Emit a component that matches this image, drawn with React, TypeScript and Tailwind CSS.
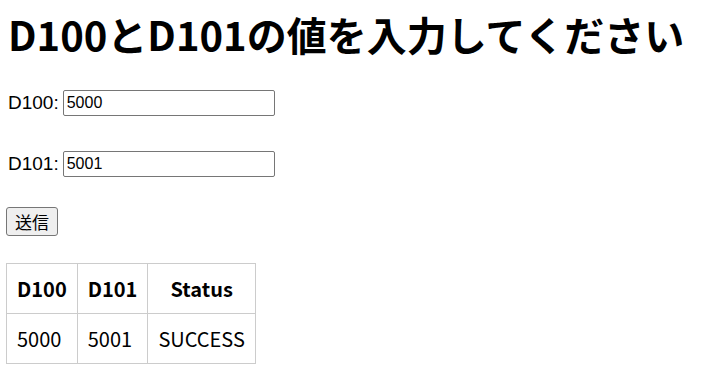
export default function App() {
  return (
    <div className="px-[6px] text-black bg-white min-h-[372px]" style={{ fontFamily: '"Noto Sans CJK JP", "Noto Sans", sans-serif' }}>
      <h1 className="pt-[6px] text-[40px] font-bold leading-[56px] pl-[2px] m-0">D100とD101の値を入力してください</h1>
      <div className="mt-[28px] flex items-center h-[26px] text-[19px] pl-[2px]" style={{ fontFamily: '"Liberation Sans", Arial, sans-serif' }}>
        <span className="mr-[4px]">D100:</span>
        <input
          defaultValue="5000"
          className="w-[212px] h-[26px] border border-[#767676] rounded-[2px] px-[3px] text-[16px] outline-none"
        />
      </div>
      <div className="mt-[35px] flex items-center h-[26px] text-[19px] pl-[2px]" style={{ fontFamily: '"Liberation Sans", Arial, sans-serif' }}>
        <span className="mr-[4px]">D101:</span>
        <input
          defaultValue="5001"
          className="w-[212px] h-[26px] border border-[#767676] rounded-[2px] px-[3px] text-[16px] outline-none"
        />
      </div>
      <button className="mt-[30px] w-[52px] h-[29px] bg-[#efefef] border border-[#767676] rounded-[3px] text-[17px] flex items-center justify-center">
        送信
      </button>
      <table className="mt-[27px] border-collapse text-[20px]">
        <thead>
          <tr className="h-[50px]">
            <th className="border border-[#cccccc] px-[10px] font-bold">D100</th>
            <th className="border border-[#cccccc] px-[10px] font-bold">D101</th>
            <th className="border border-[#cccccc] px-[10px] font-bold">Status</th>
          </tr>
        </thead>
        <tbody>
          <tr className="h-[50px]">
            <td className="border border-[#cccccc] px-[10px]">5000</td>
            <td className="border border-[#cccccc] px-[10px]">5001</td>
            <td className="border border-[#cccccc] px-[10px]">SUCCESS</td>
          </tr>
        </tbody>
      </table>
    </div>
  );
}
